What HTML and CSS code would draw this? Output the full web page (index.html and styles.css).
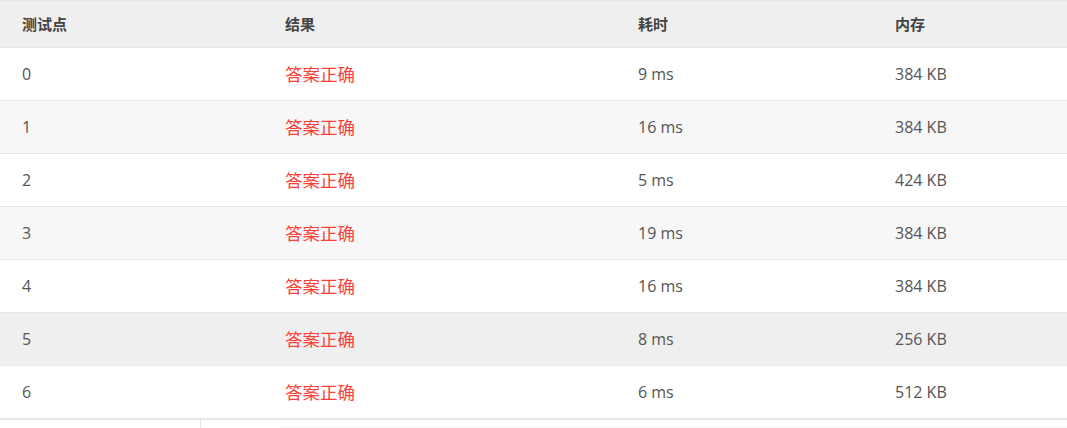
FILE: index.html
```html
<!DOCTYPE html>
<html lang="zh">
<head>
<meta charset="utf-8">
<link rel="stylesheet" href="styles.css">
</head>
<body>
<div class="table">
  <div class="row head">
    <div class="cell">测试点</div>
    <div class="cell">结果</div>
    <div class="cell">耗时</div>
    <div class="cell">内存</div>
  </div>
  <div class="row">
    <div class="cell">0</div><div class="cell ok">答案正确</div><div class="cell">9 ms</div><div class="cell">384 KB</div>
  </div>
  <div class="row alt">
    <div class="cell">1</div><div class="cell ok">答案正确</div><div class="cell">16 ms</div><div class="cell">384 KB</div>
  </div>
  <div class="row">
    <div class="cell">2</div><div class="cell ok">答案正确</div><div class="cell">5 ms</div><div class="cell">424 KB</div>
  </div>
  <div class="row alt">
    <div class="cell">3</div><div class="cell ok">答案正确</div><div class="cell">19 ms</div><div class="cell">384 KB</div>
  </div>
  <div class="row">
    <div class="cell">4</div><div class="cell ok">答案正确</div><div class="cell">16 ms</div><div class="cell">384 KB</div>
  </div>
  <div class="row hover">
    <div class="cell">5</div><div class="cell ok">答案正确</div><div class="cell">8 ms</div><div class="cell">256 KB</div>
  </div>
  <div class="row last">
    <div class="cell">6</div><div class="cell ok">答案正确</div><div class="cell">6 ms</div><div class="cell">512 KB</div>
  </div>
</div>
<div class="below">
  <div class="below-left"></div>
  <div class="below-right"><div class="below-box"></div></div>
</div>
</body>
</html>
```

FILE: styles.css
```css
html, body {
  margin: 0;
  padding: 0;
  background: #ffffff;
}
body {
  font-family: "Open Sans", "Noto Sans CJK SC", sans-serif;
  font-size: 16px;
  color: #555555;
  width: 1067px;
  overflow: hidden;
}
.table {
  border-top: 1px solid #e8e8e8;
}
.row {
  display: grid;
  grid-template-columns: 263px 353px 257px 194px;
  height: 52px;
  border-bottom: 1px solid #e8e8e8;
  align-items: center;
}
.row.head {
  height: 46px;
  background: #efefef;
  font-family: "Noto Sans CJK SC", sans-serif;
  font-size: 15px;
  font-weight: 700;
  color: #444444;
}
.row.alt {
  background: #f7f7f7;
}
.row.hover {
  background: #efefef;
}
.row.last {
  border-bottom: 2px solid #e6e6e6;
}
.cell {
  padding-left: 22px;
  line-height: 22px;
}
.cell.ok {
  color: #fa3e3a;
  font-family: "Noto Sans CJK SC", sans-serif;
  font-size: 17.5px;
}
.below {
  display: flex;
  height: 20px;
}
.below-left {
  width: 200px;
}
.below-right {
  flex: 1;
  border-left: 1px solid #e6e6e6;
  padding: 6px 0 0 79px;
}
.below-box {
  height: 20px;
  background: #fafafa;
}
```
